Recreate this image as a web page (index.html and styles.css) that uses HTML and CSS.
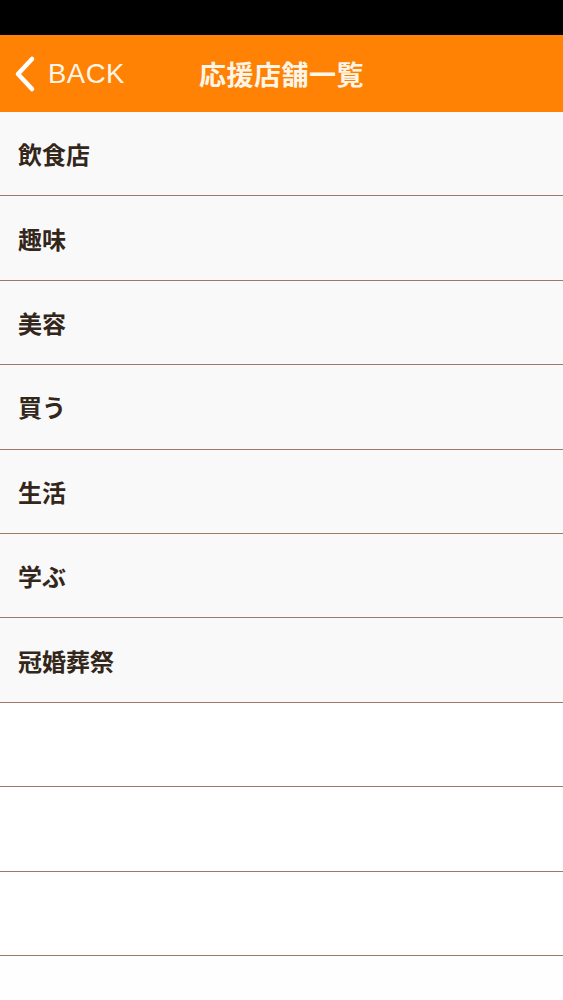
FILE: index.html
```html
<!DOCTYPE html>
<html lang="ja">
<head>
<meta charset="utf-8">
<link rel="stylesheet" href="styles.css">
</head>
<body>
<div class="status"></div>
<header class="nav">
  <div class="back">
    <svg class="chev" width="24" height="38" viewBox="0 0 24 38"><path d="M19 4 L5 19 L19 34" fill="none" stroke="#fff" stroke-width="4.5" stroke-linecap="round" stroke-linejoin="round"/></svg>
    <span class="back-text">BACK</span>
  </div>
  <h1 class="title">応援店舗一覧</h1>
</header>
<ul class="list">
  <li class="row filled">飲食店</li>
  <li class="row filled">趣味</li>
  <li class="row filled">美容</li>
  <li class="row filled">買う</li>
  <li class="row filled">生活</li>
  <li class="row filled">学ぶ</li>
  <li class="row filled">冠婚葬祭</li>
  <li class="row"></li>
  <li class="row"></li>
  <li class="row"></li>
</ul>
</body>
</html>
```
FILE: styles.css
```css
html, body {
  margin: 0;
  padding: 0;
  background: #fefefe;
  font-family: "Noto Sans CJK JP", "Noto Sans", sans-serif;
}
.status {
  height: 35px;
  background: #000;
}
.nav {
  height: 77px;
  background: #ff8205;
  position: relative;
  display: flex;
  align-items: center;
  justify-content: center;
}
.back {
  position: absolute;
  left: 13px;
  top: 0;
  bottom: 0;
  display: flex;
  align-items: center;
  gap: 11px;
  color: #fdf6e8;
}
.chev {
  display: block;
}
.back-text {
  font-family: "Liberation Sans", Arial, sans-serif;
  font-size: 27.5px;
  letter-spacing: 0.5px;
}
.title {
  margin: 0;
  color: #fdf6e8;
  font-size: 27px;
  font-weight: 700;
  letter-spacing: 0.5px;
}
.list {
  list-style: none;
  margin: 0;
  padding: 0;
}
.row {
  box-sizing: border-box;
  height: 84.4px;
  border-bottom: 1.5px solid #9c7866;
  display: flex;
  align-items: center;
  padding-left: 18px;
  font-size: 24px;
  font-weight: 700;
  color: #33261a;
  background: #fff;
}
.row.filled {
  background: #f9f9f9;
}
```
